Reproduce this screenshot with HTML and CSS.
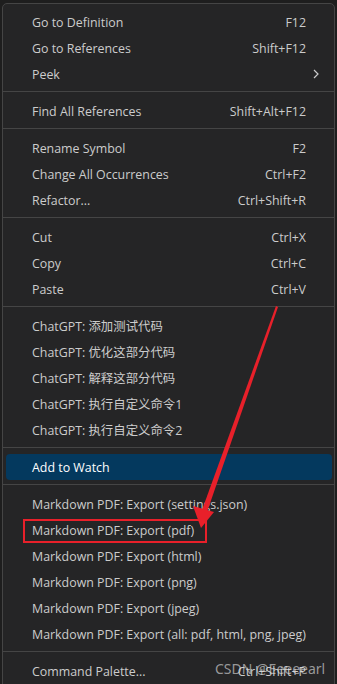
FILE: index.html
```html
<!DOCTYPE html>
<html lang="zh-CN">
<head>
  <meta charset="UTF-8" />
  <meta name="viewport" content="width=device-width, initial-scale=1.0" />
  <title>Editor context menu</title>
  <link rel="stylesheet" href="styles.css">
</head>
<body>
  <div class="menu">
    <div class="item"><span>Go to Definition</span><span class="key">F12</span></div>
    <div class="item"><span>Go to References</span><span class="key">Shift+F12</span></div>
    <div class="item"><span>Peek</span><span class="sub">
      <svg width="8" height="12" viewBox="0 0 8 12"><path d="M2 2l4 4-4 4" fill="none" stroke="#cccccc" stroke-width="1.2"/></svg>
    </span></div>
    <div class="sep"></div>
    <div class="item"><span>Find All References</span><span class="key">Shift+Alt+F12</span></div>
    <div class="sep"></div>
    <div class="item"><span>Rename Symbol</span><span class="key">F2</span></div>
    <div class="item"><span>Change All Occurrences</span><span class="key">Ctrl+F2</span></div>
    <div class="item"><span>Refactor...</span><span class="key">Ctrl+Shift+R</span></div>
    <div class="sep"></div>
    <div class="item"><span>Cut</span><span class="key">Ctrl+X</span></div>
    <div class="item"><span>Copy</span><span class="key">Ctrl+C</span></div>
    <div class="item"><span>Paste</span><span class="key">Ctrl+V</span></div>
    <div class="sep"></div>
    <div class="item"><span>ChatGPT: 添加测试代码</span></div>
    <div class="item"><span>ChatGPT: 优化这部分代码</span></div>
    <div class="item"><span>ChatGPT: 解释这部分代码</span></div>
    <div class="item"><span>ChatGPT: 执行自定义命令1</span></div>
    <div class="item"><span>ChatGPT: 执行自定义命令2</span></div>
    <div class="sep"></div>
    <div class="item active"><span>Add to Watch</span></div>
    <div class="sep"></div>
    <div class="item"><span>Markdown PDF: Export (settings.json)</span></div>
    <div class="item"><span>Markdown PDF: Export (pdf)</span></div>
    <div class="item"><span>Markdown PDF: Export (html)</span></div>
    <div class="item"><span>Markdown PDF: Export (png)</span></div>
    <div class="item"><span>Markdown PDF: Export (jpeg)</span></div>
    <div class="item"><span>Markdown PDF: Export (all: pdf, html, png, jpeg)</span></div>
    <div class="sep"></div>
    <div class="item"><span>Command Palette...</span><span class="key">Ctrl+Shift+P</span></div>
  </div>

  <!-- annotation drawn over the screenshot -->
  <svg class="marks" width="337" height="684" viewBox="0 0 337 684">
    <rect x="24" y="520" width="182" height="22" fill="none" stroke="#e8202a" stroke-width="2"/>
    <polygon points="276,306 278,307 207,512 202,510" fill="#e8202a"/>
    <polygon points="201,528 193,506 214,512" fill="#e8202a"/>
  </svg>
  <div class="watermark">CSDN @Eeeeearl</div>
</body>
</html>
```

FILE: styles.css
```css
* {
  box-sizing: border-box;
  margin: 0;
  padding: 0;
}

body {
  background: #1e1e1e;
  font-family: 'Open Sans', 'Noto Sans CJK SC', sans-serif;
  font-size: 12.4px;
  color: #cccccc;
  height: 684px;
  overflow: hidden;
  position: relative;
}

.menu {
  margin: 3px 0 0 2px;
  width: 333px;
  background: #252526;
  border: 1px solid #454545;
  border-radius: 5px;
  padding: 5px 0;
}

.item {
  height: 26px;
  margin: 0 2px 0 3px;
  padding: 0 26px;
  display: flex;
  align-items: center;
  justify-content: space-between;
  border-radius: 4px;
  position: relative;
  white-space: nowrap;
}

.item.active {
  background: #04395e;
  color: #ffffff;
}

.key {
  color: #cccccc;
}

.sub {
  position: absolute;
  right: 12px;
  top: 7px;
  display: flex;
}

.sep {
  height: 1px;
  background: #454545;
  margin: 4px 0 6px;
}

.marks {
  position: absolute;
  left: 0;
  top: 0;
}

.watermark {
  position: absolute;
  left: 215px;
  top: 659px;
  font-family: 'Noto Sans', sans-serif;
  font-size: 14px;
  color: rgba(220, 220, 220, 0.65);
}
```
